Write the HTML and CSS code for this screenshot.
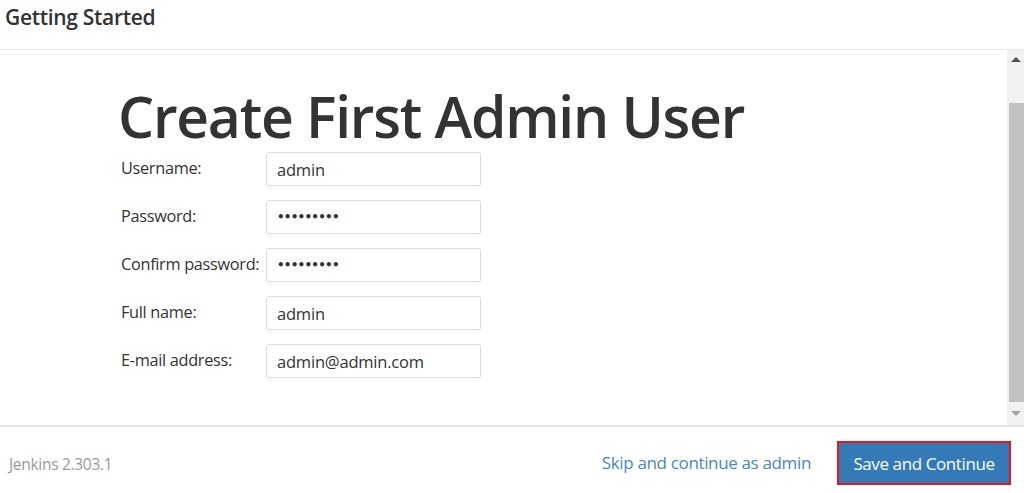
FILE: index.html
```html
<!DOCTYPE html>
<html>
<head>
<meta charset="utf-8">
<link rel="stylesheet" href="styles.css">
</head>
<body>
<div class="app">
  <header class="top">
    <h4 class="title">Getting Started</h4>
  </header>
  <div class="middle">
    <main class="content">
      <h1 class="heading">Create First Admin User</h1>
      <form class="form">
        <div class="row"><label class="label">Username:</label><div class="field">admin</div></div>
        <div class="row"><label class="label">Password:</label><div class="field dots">•••••••••</div></div>
        <div class="row"><label class="label">Confirm password:</label><div class="field dots">•••••••••</div></div>
        <div class="row"><label class="label">Full name:</label><div class="field">admin</div></div>
        <div class="row"><label class="label">E-mail address:</label><div class="field">admin@admin.com</div></div>
      </form>
    </main>
    <div class="scrollbar">
      <div class="arrow up"></div>
      <div class="track"><div class="thumb"></div></div>
      <div class="arrow down"></div>
    </div>
  </div>
  <footer class="bottom">
    <span class="version">Jenkins 2.303.1</span>
    <div class="actions">
      <a class="skip">Skip and continue as admin</a>
      <button class="save" type="button">Save and Continue</button>
    </div>
  </footer>
</div>
</body>
</html>
```
FILE: styles.css
```css
html, body {
  margin: 0;
  padding: 0;
  background: #fff;
}
body {
  font-family: "Open Sans", "Noto Sans", sans-serif;
  color: #333;
}
.app {
  width: 1024px;
  height: 493px;
  display: flex;
  flex-direction: column;
}
.top {
  height: 49px;
  border-bottom: 1px solid #e5e5e5;
  display: flex;
  align-items: flex-start;
  padding-left: 5px;
}
.title {
  margin: 3px 0 0 0;
  font-size: 21px;
  font-weight: 600;
  letter-spacing: -0.3px;
  color: #333;
}
.middle {
  height: 375px;
  display: flex;
  border-bottom: 2px solid #e3e3e3;
}
.content {
  flex: 1;
  padding-left: 118px;
}
.heading {
  margin: 56px 0 0 0;
  font-size: 57px;
  font-weight: 600;
  line-height: 20px;
  letter-spacing: -1.25px;
  color: #333;
}
.form {
  margin-top: 26px;
  display: flex;
  flex-direction: column;
  gap: 14px;
  padding-left: 3px;
}
.row {
  display: flex;
  align-items: center;
  height: 34px;
}
.label {
  width: 145px;
  font-size: 16.3px;
  letter-spacing: -0.3px;
  color: #333;
  margin-top: -3px;
  white-space: nowrap;
}
.field {
  box-sizing: border-box;
  width: 215px;
  height: 34px;
  border: 1px solid #dcdcdc;
  border-radius: 2px;
  padding: 0 10px;
  display: flex;
  align-items: center;
  font-size: 16.5px;
  letter-spacing: -0.2px;
  color: #333;
}
.dots {
  font-size: 12px;
  font-weight: bold;
  letter-spacing: -0.8px;
  font-family: "DejaVu Sans", sans-serif;
}
.scrollbar {
  width: 17px;
  background: #f1f1f1;
  display: flex;
  flex-direction: column;
  align-items: center;
}
.arrow {
  width: 0;
  height: 0;
  border-left: 5px solid transparent;
  border-right: 5px solid transparent;
}
.arrow.up {
  margin: 7px 0 0 0;
  border-bottom: 5px solid #505050;
}
.arrow.down {
  margin: 0 0 9px 0;
  border-top: 5px solid #a3a3a3;
}
.track {
  flex: 1;
  width: 100%;
  display: flex;
  justify-content: center;
  padding: 41px 0 9px 0;
  box-sizing: border-box;
}
.thumb {
  width: 15px;
  height: 100%;
  background: #c1c1c1;
  margin-left: 2px;
}
.bottom {
  flex: 1;
  display: flex;
  align-items: center;
  justify-content: space-between;
  padding: 0 13px 0 9px;
}
.version {
  font-size: 15.5px;
  color: #999;
  margin-top: 7px;
  letter-spacing: -0.3px;
}
.actions {
  display: flex;
  align-items: center;
  gap: 26px;
}
.skip {
  font-size: 17px;
  color: #4a87c4;
  letter-spacing: -0.35px;
  margin-top: 4px;
}
.save {
  box-sizing: border-box;
  height: 44px;
  width: 174px;
  background: #337ab7;
  color: #fff;
  font-family: "Open Sans", "Noto Sans", sans-serif;
  font-size: 17px;
  letter-spacing: -0.4px;
  border: 2px solid #e8141e;
  border-radius: 0;
  padding: 0;
  margin-top: 6px;
}
```
